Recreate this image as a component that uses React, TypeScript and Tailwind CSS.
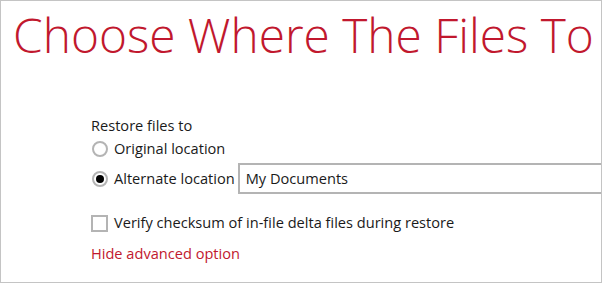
import React from 'react';

const red = 'text-[#c1182e]';

const Radio = ({ checked, label }: { checked?: boolean; label: string }) => (
  <label className="flex items-center whitespace-nowrap shrink-0">
    <span className="w-4 h-4 rounded-full border-2 border-[#b4b4b4] flex items-center justify-center ml-px mr-[6px]">
      {checked && <span className="w-2 h-2 rounded-full bg-black" />}
    </span>
    <span>{label}</span>
  </label>
);

export default function App() {
  return (
    <div
      className="w-[602px] h-[283px] border border-[#c4c4c4] bg-white overflow-hidden text-[14.6px] text-[#1a1a1a]"
      style={{ fontFamily: '"Open Sans", "Liberation Sans", sans-serif' }}
    >
      <h1 className={`${red} font-light text-[47.8px] leading-none whitespace-nowrap pl-[12px] pt-[10px]`}>
        Choose Where The Files To
      </h1>

      <div className="pl-[90px] pt-[56px]">
        <div className="leading-5">Restore files to</div>
        <div className="flex items-center h-[28px]">
          <Radio label="Original location" />
        </div>
        <div className="flex items-center h-[32px]">
          <Radio checked label="Alternate location" />
          <div className="ml-[3px] h-[31px] w-[420px] border-2 border-[#b4b4b4] flex items-center pl-[6px] shrink-0 whitespace-nowrap">
            My Documents
          </div>
        </div>

        <label className="flex items-center h-[17px] mt-[20px] whitespace-nowrap">
          <span className="w-[17px] h-[17px] border-2 border-[#b4b4b4] mr-[6px] shrink-0" />
          <span>Verify checksum of in-file delta files during restore</span>
        </label>

        <div className={`${red} leading-5 mt-[11px]`}>Hide advanced option</div>
      </div>
    </div>
  );
}
